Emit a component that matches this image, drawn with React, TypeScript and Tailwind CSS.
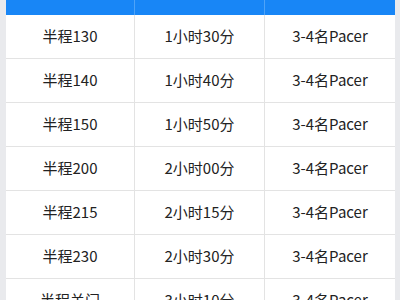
const rows = [
  ['半程130', '1小时30分', '3-4名Pacer'],
  ['半程140', '1小时40分', '3-4名Pacer'],
  ['半程150', '1小时50分', '3-4名Pacer'],
  ['半程200', '2小时00分', '3-4名Pacer'],
  ['半程215', '2小时15分', '3-4名Pacer'],
  ['半程230', '2小时30分', '3-4名Pacer'],
  ['半程关门', '3小时10分', '3-4名Pacer'],
];

export default function App() {
  return (
    <div
      className="w-[400px] h-[300px] overflow-hidden bg-[#e9eaed] px-[6px]"
      style={{ fontFamily: '"Noto Sans CJK SC", "Noto Sans", sans-serif' }}
    >
      <div className="mt-[-31px] mr-[-1px] bg-white text-[15px] text-[#222]">
        <div className="grid grid-cols-[129px_130px_1fr] h-[46px] bg-[#1886f6] text-white font-medium">
          <div className="flex items-center justify-center border-r border-[#4ea3f8]">组别</div>
          <div className="flex items-center justify-center border-r border-[#4ea3f8]">关门时间</div>
          <div className="flex items-center justify-center">配速员</div>
        </div>
        {rows.map((r) => (
          <div
            key={r[0]}
            className="grid grid-cols-[129px_130px_1fr] h-[44px] border-b border-[#e3e3e3]"
          >
            <div className="flex items-center justify-center border-r border-[#e3e3e3]">{r[0]}</div>
            <div className="flex items-center justify-center border-r border-[#e3e3e3]">{r[1]}</div>
            <div className="flex items-center justify-center">{r[2]}</div>
          </div>
        ))}
      </div>
    </div>
  );
}
